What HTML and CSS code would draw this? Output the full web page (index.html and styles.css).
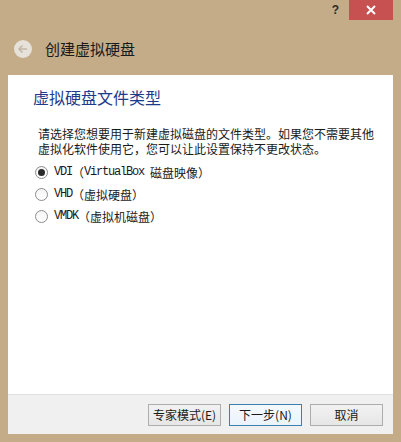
FILE: index.html
```html
<!DOCTYPE html>
<html lang="zh-CN">
<head>
    <meta charset="UTF-8">
    <title>创建虚拟硬盘</title>
    <link rel="stylesheet" href="styles.css">
</head>
<body>
    <div class="window">
        <div class="titlebar">
            <span class="help">?</span>
            <span class="close">
                <svg width="10" height="10" viewBox="0 0 10 10">
                    <path d="M1 1 L9 9 M9 1 L1 9" stroke="#fff" stroke-width="2"/>
                </svg>
            </span>
        </div>

        <div class="header">
            <span class="back">
                <svg width="18" height="18" viewBox="0 0 18 18">
                    <circle cx="9" cy="9" r="9" fill="#e6e1d9"/>
                    <path d="M13 9 H5 M8.5 5.5 L5 9 L8.5 12.5" stroke="#c2b8a6" stroke-width="1.6" fill="none"/>
                </svg>
            </span>
            <span class="header-title">创建虚拟硬盘</span>
        </div>

        <div class="panel">
            <h1 class="heading">虚拟硬盘文件类型</h1>
            <p class="info">请选择您想要用于新建虚拟磁盘的文件类型。如果您不需要其他虚拟化软件使用它，您可以让此设置保持不更改状态。</p>

            <div class="options">
                <label class="option"><span class="radio checked"></span><span class="latin">VDI</span>（<span class="latin">VirtualBox </span>磁盘映像）</label>
                <label class="option"><span class="radio"></span><span class="latin">VHD</span>（虚拟硬盘）</label>
                <label class="option"><span class="radio"></span><span class="latin">VMDK</span>（虚拟机磁盘）</label>
            </div>
        </div>

        <div class="footer">
            <button class="btn">专家模式(E)</button>
            <button class="btn btn-default">下一步(N)</button>
            <button class="btn">取消</button>
        </div>
    </div>
</body>
</html>
```

FILE: styles.css
```css
body {
    margin: 0;
    padding: 0;
    background-color: #c4ac88; /* рамка окна */
    font-family: "Noto Sans CJK SC", sans-serif;
    font-size: 12px;
    color: #1a1a1a;
}
.window {
    height: 442px;
    box-sizing: border-box;
    padding: 0 8px 8px 8px;
    display: flex;
    flex-direction: column;
}

/* заголовок окна */
.titlebar {
    height: 20px;
    display: flex;
    justify-content: flex-end;
    align-items: center;
}
.help {
    font-family: "Liberation Sans", sans-serif;
    font-weight: bold;
    font-size: 12px;
    color: #2b2b2b;
    margin-right: 10px;
}
.close {
    width: 44px;
    height: 20px;
    background-color: #c75050;
    display: flex;
    align-items: center;
    justify-content: center;
}

.header {
    height: 55px;
    display: flex;
    align-items: center;
    padding-left: 6px;
    padding-top: 2px;
    box-sizing: border-box;
}
.back {
    display: flex;
    margin-right: 13px;
}
.header-title {
    font-size: 15px;
    color: #1a1a1a;
}

/* белая панель */
.panel {
    flex: 1;
    background-color: #ffffff;
    padding: 12px 10px 0 25px;
}
.heading {
    margin: 0;
    font-size: 16px;
    font-weight: normal;
    line-height: 20px;
    color: #1e3a8a;
}
.info {
    margin: 19px 0 0 5px;
    width: 340px;
    line-height: 15px;
}
.options {
    margin-top: 5px;
}
.option {
    display: flex;
    align-items: center;
    height: 22px;
    margin-left: 2px;
    font-size: 12px;
    white-space: pre;
}
.latin {
    font-family: "Liberation Mono", monospace;
    letter-spacing: -1.2px;
}
.radio {
    width: 11px;
    height: 11px;
    border: 1px solid #8c8c8c;
    border-radius: 50%;
    background: linear-gradient(#f4f4f4, #ffffff);
    margin-right: 6px;
    position: relative;
}
.radio.checked::after {
    content: "";
    position: absolute;
    left: 2px;
    top: 2px;
    width: 7px;
    height: 7px;
    border-radius: 50%;
    background-color: #2a2a2a;
}

/* кнопки внизу */
.footer {
    height: 40px;
    box-sizing: border-box;
    border-top: 1px solid #dfdfdf;
    background-color: #f0f0f0;
    display: flex;
    justify-content: flex-end;
    align-items: center;
    gap: 8px;
    padding-right: 10px;
}
.btn {
    width: 73px;
    height: 22px;
    padding: 0;
    border: 1px solid #adadad;
    background: linear-gradient(#f2f2f2, #e6e6e6);
    font-family: "Noto Sans CJK SC", sans-serif;
    font-size: 12px;
    color: #1a1a1a;
}
.btn-default {
    border-color: #3c7fb1;
    background: linear-gradient(#f4f9fd, #eaf3fb);
}
```
